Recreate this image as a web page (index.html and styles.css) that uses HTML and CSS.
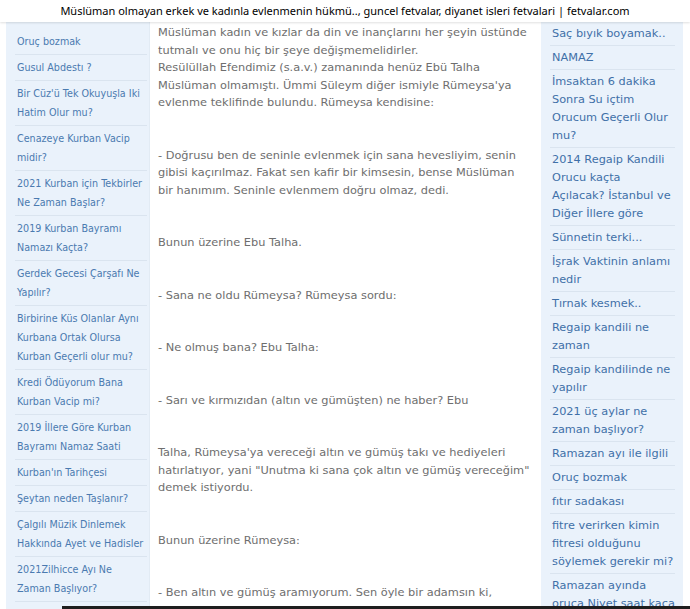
FILE: index.html
```html
<!DOCTYPE html>
<html lang="tr">
<head>
    <meta charset="UTF-8">
    <meta name="viewport" content="width=device-width, initial-scale=1.0">
    <title>Müslüman olmayan erkek ve kadınla evlenmenin hükmü.., guncel fetvalar, diyanet isleri fetvalari | fetvalar.com</title>
    <link rel="stylesheet" href="styles.css">
</head>
<body>
    <div class="title-bar">Müslüman olmayan erkek ve kadınla evlenmenin hükmü.., guncel fetvalar, diyanet isleri fetvalari | fetvalar.com</div>

    <div class="page">
        <ul class="side side-left">
            <li><a href="#">Oruç bozmak</a></li>
            <li><a href="#">Gusul Abdestı ?</a></li>
            <li><a href="#">Bir Cüz'ü Tek Okuyuşla Iki Hatim Olur mu?</a></li>
            <li><a href="#">Cenazeye Kurban Vacip midir?</a></li>
            <li><a href="#">2021 Kurban için Tekbirler Ne Zaman Başlar?</a></li>
            <li><a href="#">2019 Kurban Bayramı Namazı Kaçta?</a></li>
            <li><a href="#">Gerdek Gecesi Çarşafı Ne Yapılır?</a></li>
            <li><a href="#">Birbirine Küs Olanlar Aynı Kurbana Ortak Olursa Kurban Geçerli olur mu?</a></li>
            <li><a href="#">Kredi Ödüyorum Bana Kurban Vacip mi?</a></li>
            <li><a href="#">2019 İllere Göre Kurban Bayramı Namaz Saati</a></li>
            <li><a href="#">Kurban'ın Tarihçesi</a></li>
            <li><a href="#">Şeytan neden Taşlanır?</a></li>
            <li><a href="#">Çalgılı Müzik Dinlemek Hakkında Ayet ve Hadisler</a></li>
            <li><a href="#">2021Zilhicce Ayı Ne Zaman Başlıyor?</a></li>
            <li><a href="#">2021 Kurban bayramı Ne Zaman?</a></li>
        </ul>

        <div class="article">
            <p>Müslüman kadın ve kızlar da din ve inançlarını her şeyin üstünde tutmalı ve onu hiç bir şeye değişmemelidirler.<br>
            Resülüllah Efendimiz (s.a.v.) zamanında henüz Ebü Talha Müslüman olmamıştı. Ümmi Süleym diğer ismiyle Rümeysa'ya evlenme teklifinde bulundu. Rümeysa kendisine:</p>
            <p>- Doğrusu ben de seninle evlenmek için sana hevesliyim, senin gibisi kaçırılmaz. Fakat sen kafir bir kimsesin, bense Müslüman bir hanımım. Seninle evlenmem doğru olmaz, dedi.</p>
            <p>Bunun üzerine Ebu Talha.</p>
            <p>- Sana ne oldu Rümeysa? Rümeysa sordu:</p>
            <p>- Ne olmuş bana? Ebu Talha:</p>
            <p>- Sarı ve kırmızıdan (altın ve gümüşten) ne haber? Ebu</p>
            <p>Talha, Rümeysa'ya vereceği altın ve gümüş takı ve hediyeleri hatırlatıyor, yani "Unutma ki sana çok altın ve gümüş vereceğim" demek istiyordu.</p>
            <p>Bunun üzerine Rümeysa:</p>
            <p>- Ben altın ve gümüş aramıyorum. Sen öyle bir adamsın ki, reddedilmezsin. Ancak sen kafirsin, bense Müslüman bir kadınım.</p>
        </div>

        <ul class="side side-right">
            <li><a href="#">Saç bıyık boyamak..</a></li>
            <li><a href="#">NAMAZ</a></li>
            <li><a href="#">İmsaktan 6 dakika Sonra Su içtim Orucum Geçerli Olur mu?</a></li>
            <li><a href="#">2014 Regaip Kandili Orucu kaçta Açılacak? İstanbul ve Diğer İllere göre</a></li>
            <li><a href="#">Sünnetin terki...</a></li>
            <li><a href="#">İşrak Vaktinin anlamı nedir</a></li>
            <li><a href="#">Tırnak kesmek..</a></li>
            <li><a href="#">Regaip kandili ne zaman</a></li>
            <li><a href="#">Regaip kandilinde ne yapılır</a></li>
            <li><a href="#">2021 üç aylar ne zaman başlıyor?</a></li>
            <li><a href="#">Ramazan ayı ile ilgili</a></li>
            <li><a href="#">Oruç bozmak</a></li>
            <li><a href="#">fıtır sadakası</a></li>
            <li><a href="#">fitre verirken kimin fitresi olduğunu söylemek gerekir mi?</a></li>
            <li><a href="#">Ramazan ayında oruca Niyet saat kaça kadar</a></li>
        </ul>
    </div>

    <div class="bottom-edge"></div>
</body>
</html>
```

FILE: styles.css
```css
html, body {
    margin: 0;
    height: 100%;
    overflow: hidden;
    background: #fff;
}
.title-bar {
    height: 22px;
    line-height: 22px;
    text-align: center;
    font-family: "Noto Sans", sans-serif;
    font-size: 11px;
    color: #000;
    background: #fff;
    box-shadow: 0 1px 2px rgba(0, 0, 0, 0.12);
    position: relative;
    z-index: 1;
    white-space: nowrap;
}
.page {
    display: grid;
    grid-template-columns: 143px 1fr 142px;
    padding: 0 7px 0 6px;
    height: calc(100% - 22px);
    overflow: hidden;
    font-family: "DejaVu Sans", Verdana, sans-serif;
}
.side {
    list-style: none;
    margin: 0;
    background: #eaf2fb;
}
.side li {
    border-bottom: 1px solid #dae4ef;
}
.side a {
    color: #4a7ab0;
    text-decoration: none;
}
.side-left {
    padding: 7px 2px 0 9px;
    font-size: 9.6px;
    line-height: 19px;
}
.side-left li {
    padding: 3px 0 3px 2px;
}
.side-right {
    padding: 0 8px 0 9px;
    font-size: 11.3px;
    line-height: 18px;
}
.side-right li {
    padding: 3px 0 2px 2px;
}
.side-right a {
    color: #3f70a8;
}
.article {
    border-left: 1px solid #e2ebf4;
    padding: 2px 10px 0 8px;
    font-size: 11.35px;
    line-height: 17.5px;
    color: #6e6e6e;
}
.article p {
    margin: 0 0 35px;
}
.bottom-edge {
    position: fixed;
    left: 62px;
    right: 0;
    bottom: 0;
    height: 3px;
    background: #1e1e1e;
}
```
